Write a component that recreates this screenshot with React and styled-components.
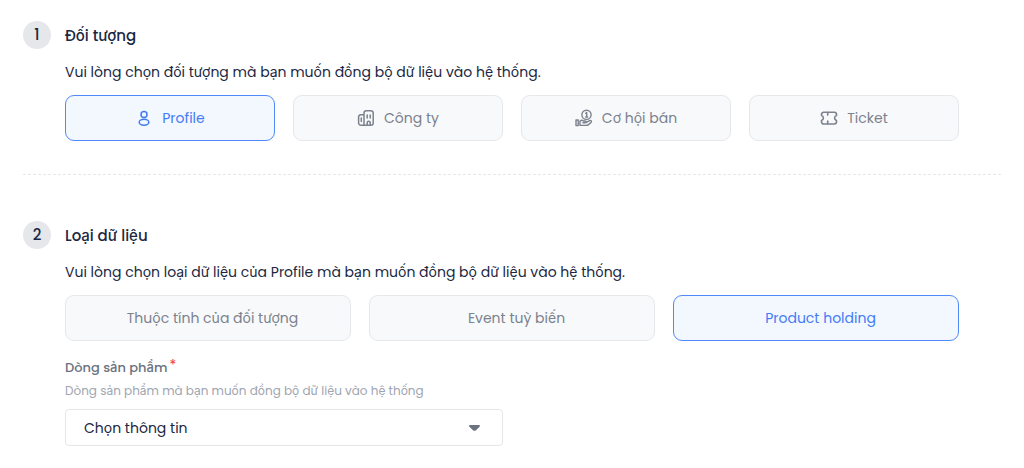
import React, { useState } from "react"
import styled, { createGlobalStyle } from "styled-components"

const GlobalStyle = createGlobalStyle`
    * {
        box-sizing: border-box;
    }
    body {
        margin: 0;
        background: #ffffff;
        color: #1b2742;
        font-family: Poppins, Inter, "Noto Sans", sans-serif;
        font-size: 14px;
        line-height: 22px;
    }
`

const Page = styled.main`
    padding: 21px 23px 22px;
`

const Step = styled.section`
    display: grid;
    grid-template-columns: 28px minmax(0, 1fr);
    column-gap: 14px;
    padding-right: 42px;
`

const StepNumber = styled.span`
    display: flex;
    align-items: center;
    justify-content: center;
    width: 28px;
    height: 28px;
    border-radius: 50%;
    background: #e5e7eb;
    font-size: 15px;
    font-weight: 500;
`

const StepTitle = styled.h2`
    margin: 0;
    font-size: 15px;
    font-weight: 500;
    line-height: 30px;
`

const StepBody = styled.div`
    grid-column: 2;
`

const Description = styled.p`
    margin: 10px 0 12px;
`

const Options = styled.div`
    display: grid;
    grid-template-columns: repeat(${(props) => props.$columns}, minmax(0, 1fr));
    gap: 18px;
`

const Option = styled.button`
    display: flex;
    align-items: center;
    justify-content: center;
    height: 46px;
    padding: 0 12px;
    border: 1px solid ${(props) => (props.$active ? "#4f8af8" : "#e5e7eb")};
    border-radius: 9px;
    background: ${(props) => (props.$active ? "#f3f8ff" : "#f8f9fb")};
    color: ${(props) => (props.$active ? "#437bf6" : "#7b828d")};
    font: inherit;
    cursor: pointer;

    svg {
        flex: none;
    }
`

const OptionName = styled.span`
    margin-left: 9px;
`

const Divider = styled.hr`
    margin: 33px 0 46px;
    border: 0;
    border-top: 1px dashed #e5e7eb;
`

const Field = styled.div`
    display: flex;
    flex-direction: column;
    width: 49%;
    margin-top: 16px;
`

const Label = styled.label`
    color: #6b7280;
    font-size: 13px;
    font-weight: 500;
`

const Required = styled.span`
    margin-left: 2px;
    color: #f5304a;
    font-size: 14px;
    font-weight: 400;
    line-height: 1;
    vertical-align: 2px;
`

const Hint = styled.span`
    color: #a0a5b1;
    font-size: 12px;
    line-height: 24px;
`

const SelectBox = styled.div`
    display: grid;
    align-items: center;
    margin-top: 6px;

    > * {
        grid-area: 1 / 1;
    }
    svg {
        justify-self: end;
        margin-right: 23px;
        pointer-events: none;
    }
`

const Select = styled.select`
    width: 100%;
    height: 37px;
    padding: 0 40px 0 18px;
    border: 1px solid #e5e7eb;
    border-radius: 4px;
    background: #ffffff;
    color: #1b2742;
    font: inherit;
    appearance: none;
`

const iconProps = {
    width: 18,
    height: 18,
    viewBox: "0 0 18 18",
    fill: "none",
    stroke: "currentColor",
    strokeWidth: 1.5,
    strokeLinecap: "round",
    strokeLinejoin: "round",
    "aria-hidden": true,
}

function ProfileIcon() {
    return (
        <svg {...iconProps}>
            <circle cx="9" cy="5.500" r="3" />
            <ellipse cx="9" cy="13.200" rx="4.800" ry="3" />
        </svg>
    )
}

function CompanyIcon() {
    return (
        <svg {...iconProps}>
            <path d="M7 16.200V4a2.300 2.300 0 0 1 2.300-2.300h4.600A2.300 2.300 0 0 1 16.200 4v9.900a2.300 2.300 0 0 1-2.300 2.300H3.900a2.300 2.300 0 0 1-2.300-2.300V8a2.300 2.300 0 0 1 2.300-2.300H7" />
            <path d="M10.200 6v3M13.200 6v3M4.300 9v3.500M10.200 16v-2.300a1.500 1.500 0 0 1 3 0V16" />
        </svg>
    )
}

function DealIcon() {
    return (
        <svg {...iconProps} strokeWidth={1.4}>
            <circle cx="11.500" cy="5.800" r="4.600" />
            <path d="M10.700 4.300l1-.7V8M10.700 8h2" />
            <path d="M1 11h2.200v5.600H1z" />
            <path d="M5 16V12.200c1.300-1.200 2.500-1 3.500-.2h1.700c1.400 0 1.400 1.800 0 1.800H8M11.400 13.300l3.200-1.700c1.500-.7 2.500.8 1.400 1.800l-2.500 2.200c-.7.600-1.300.8-2.300.8H5" />
        </svg>
    )
}

function TicketIcon() {
    return (
        <svg {...iconProps} strokeWidth={1.6}>
            <path d="M3.700 3.200h10.600a2.200 2.200 0 0 1 2.200 2.200v1.200a2.600 2.600 0 0 0 0 5v1.200a2.200 2.200 0 0 1-2.200 2.200H3.700a2.200 2.200 0 0 1-2.200-2.200v-1.200a2.600 2.600 0 0 0 0-5V5.400a2.200 2.200 0 0 1 2.200-2.200z" />
            <path d="M7.700 3.500v2.600M7.700 12.100v2.600" />
        </svg>
    )
}

function CaretIcon() {
    return (
        <svg width="11" height="6" viewBox="0 0 11 6" fill="#6b7280" aria-hidden="true">
            <path d="M1.200 0h8.600c1 0 1.500 1 .8 1.700L6.700 5.400c-.6.600-1.800.6-2.400 0L.4 1.700C-.3 1 .2 0 1.200 0z" />
        </svg>
    )
}

const objects = [
    { id: "profile", name: "Profile", Icon: ProfileIcon },
    { id: "company", name: "Công ty", Icon: CompanyIcon },
    { id: "deal", name: "Cơ hội bán", Icon: DealIcon },
    { id: "ticket", name: "Ticket", Icon: TicketIcon },
]

const dataTypes = [
    { id: "attribute", name: "Thuộc tính của đối tượng" },
    { id: "event", name: "Event tuỳ biến" },
    { id: "product", name: "Product holding" },
]

function OptionGroup({ label, items, value, onChange }) {
    return (
        <Options $columns={items.length} role="group" aria-label={label}>
            {items.map(({ id, name, Icon }) => (
                <Option
                    key={id}
                    type="button"
                    $active={id === value}
                    aria-pressed={id === value}
                    onClick={() => onChange(id)}
                >
                    {Icon && <Icon />}
                    <OptionName>{name}</OptionName>
                </Option>
            ))}
        </Options>
    )
}

function App() {
    const [object, setObject] = useState("profile")
    const [dataType, setDataType] = useState("product")
    const objectName = objects.find((item) => item.id === object).name

    return (
        <Page>
            <GlobalStyle />
            <Step>
                <StepNumber>1</StepNumber>
                <StepTitle>Đối tượng</StepTitle>
                <StepBody>
                    <Description>Vui lòng chọn đối tượng mà bạn muốn đồng bộ dữ liệu vào hệ thống.</Description>
                    <OptionGroup label="Đối tượng" items={objects} value={object} onChange={setObject} />
                </StepBody>
            </Step>
            <Divider />
            <Step>
                <StepNumber>2</StepNumber>
                <StepTitle>Loại dữ liệu</StepTitle>
                <StepBody>
                    <Description>
                        Vui lòng chọn loại dữ liệu của {objectName} mà bạn muốn đồng bộ dữ liệu vào hệ thống.
                    </Description>
                    <OptionGroup label="Loại dữ liệu" items={dataTypes} value={dataType} onChange={setDataType} />
                    <Field>
                        <Label htmlFor="product-line">
                            Dòng sản phẩm<Required>*</Required>
                        </Label>
                        <Hint id="product-line-hint">Dòng sản phẩm mà bạn muốn đồng bộ dữ liệu vào hệ thống</Hint>
                        <SelectBox>
                            <Select id="product-line" aria-describedby="product-line-hint" required defaultValue="">
                                <option value="">Chọn thông tin</option>
                            </Select>
                            <CaretIcon />
                        </SelectBox>
                    </Field>
                </StepBody>
            </Step>
        </Page>
    )
}

export default App
